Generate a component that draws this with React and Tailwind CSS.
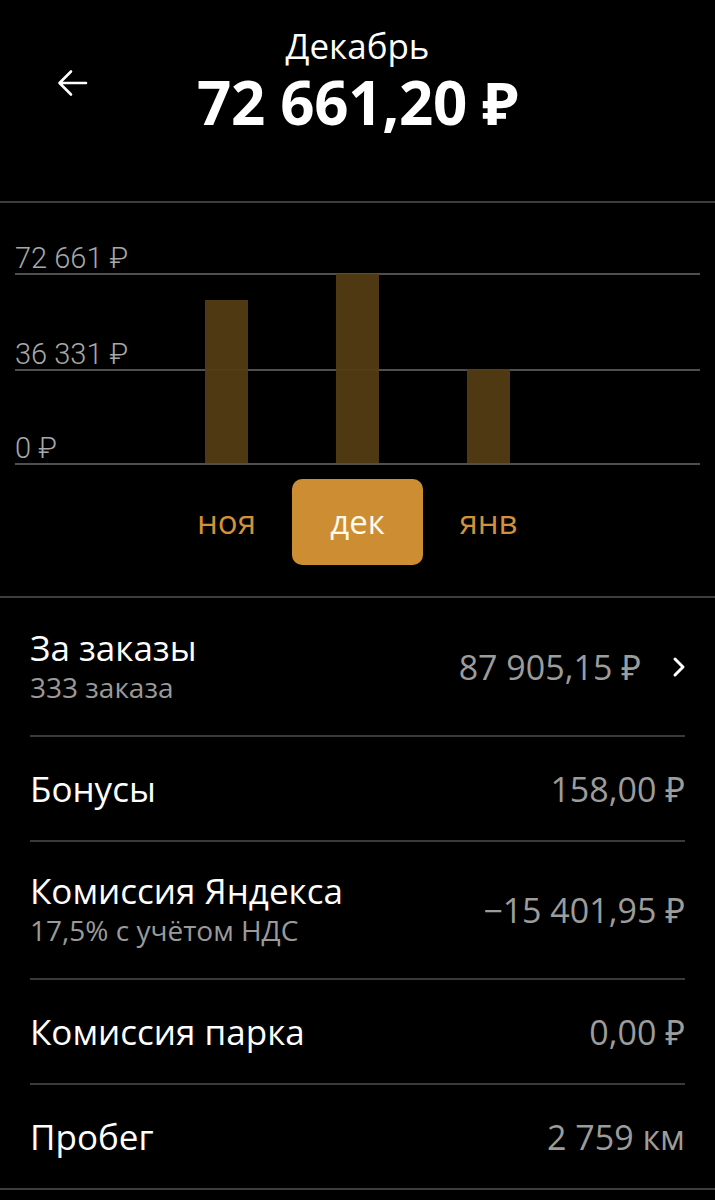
import React from "react";

const OS = { fontFamily: '"Open Sans", "Noto Sans", sans-serif' };
const RB = { fontFamily: 'Roboto, "Noto Sans", sans-serif' };

function Row({ title, sub, value, chevron, h, border = true }) {
  return (
    <div
      className={`flex items-center justify-between ${h} ${border ? "border-b-2 border-[#3a3a3a]" : ""}`}
    >
      <div className="flex flex-col">
        <div className="text-[35px] leading-[40px] text-white">{title}</div>
        {sub && <div className="text-[28px] leading-[38px] text-[#9a9a9a]">{sub}</div>}
      </div>
      <div className="flex items-center">
        <div className="text-[34px] leading-[40px] text-[#9c9c9c]">{value}</div>
        {chevron && (
          <svg width="14" height="22" viewBox="0 0 14 22" className="ml-[31px] mr-[-1px]">
            <path d="M3 3 L11 11 L3 19" fill="none" stroke="white" strokeWidth="3" strokeLinecap="round" strokeLinejoin="round" />
          </svg>
        )}
      </div>
    </div>
  );
}

export default function App() {
  return (
    <div className="min-h-[1200px] w-full bg-black" style={OS}>
      {/* Header */}
      <div className="relative h-[201px] flex flex-col items-center pt-[28px]">
        <button className="absolute left-[56px] top-[68px] w-[32px] h-[30px]">
          <svg width="32" height="30" viewBox="0 0 32 30">
            <path d="M30 15 H4 M15 3.5 L3.5 15 L15 26.5" fill="none" stroke="white" strokeWidth="2.6" strokeLinecap="round" strokeLinejoin="round" />
          </svg>
        </button>
        <div className="text-[35px] leading-[36px] text-white">Декабрь</div>
        <div className="mt-[6px] text-[60px] leading-[64px] font-bold text-white tracking-[-0.3px]">
          72 661,20 ₽
        </div>
      </div>
      <div className="h-[2px] bg-[#3d3d3d]" />

      {/* Chart */}
      <div className="relative mx-[15px] mt-[40px]" style={RB}>
        <div className="h-[32px] flex items-end border-b-2 border-[#4f4f4f]">
          <span className="text-[29px] leading-[29px] font-light text-[#a8a8a8]">72 661 ₽</span>
        </div>
        <div className="h-[96px] flex items-end border-b-2 border-[#4f4f4f]">
          <span className="text-[29px] leading-[29px] font-light text-[#a8a8a8]">36 331 ₽</span>
        </div>
        <div className="h-[94px] flex items-end border-b-2 border-[#4f4f4f]">
          <span className="text-[29px] leading-[29px] font-light text-[#a8a8a8]">0 ₽</span>
        </div>
        <div className="absolute left-[190px] bottom-[2px] flex items-end gap-[88px]">
          <div className="w-[43px] h-[163px] bg-[#523c13]/95" />
          <div className="w-[43px] h-[189px] bg-[#523c13]/95" />
          <div className="w-[43px] h-[94px] bg-[#523c13]/95" />
        </div>
      </div>

      {/* Month selector */}
      <div className="mt-[14px] flex pl-[161px]">
        <div className="w-[131px] h-[86px] flex items-center justify-center text-[33px] text-[#d3913a]">ноя</div>
        <div className="w-[131px] h-[86px] flex items-center justify-center rounded-[10px] bg-[#cd8d33] text-[33px] text-[#fffbea]">дек</div>
        <div className="w-[131px] h-[86px] flex items-center justify-center text-[33px] text-[#d3913a]">янв</div>
      </div>

      <div className="mt-[31px] h-[2px] bg-[#3d3d3d]" />

      {/* Rows */}
      <div className="px-[30px]">
        <Row title="За заказы" sub="333 заказа" value="87 905,15 ₽" chevron h="h-[139px]" />
        <Row title="Бонусы" value="158,00 ₽" h="h-[105px]" />
        <Row title="Комиссия Яндекса" sub="17,5% с учётом НДС" value="−15 401,95 ₽" h="h-[138px]" />
        <Row title="Комиссия парка" value="0,00 ₽" h="h-[105px]" />
        <Row title="Пробег" value="2 759 км" h="h-[103px]" border={false} />
      </div>
      <div className="h-[2px] bg-[#3d3d3d]" />
    </div>
  );
}
